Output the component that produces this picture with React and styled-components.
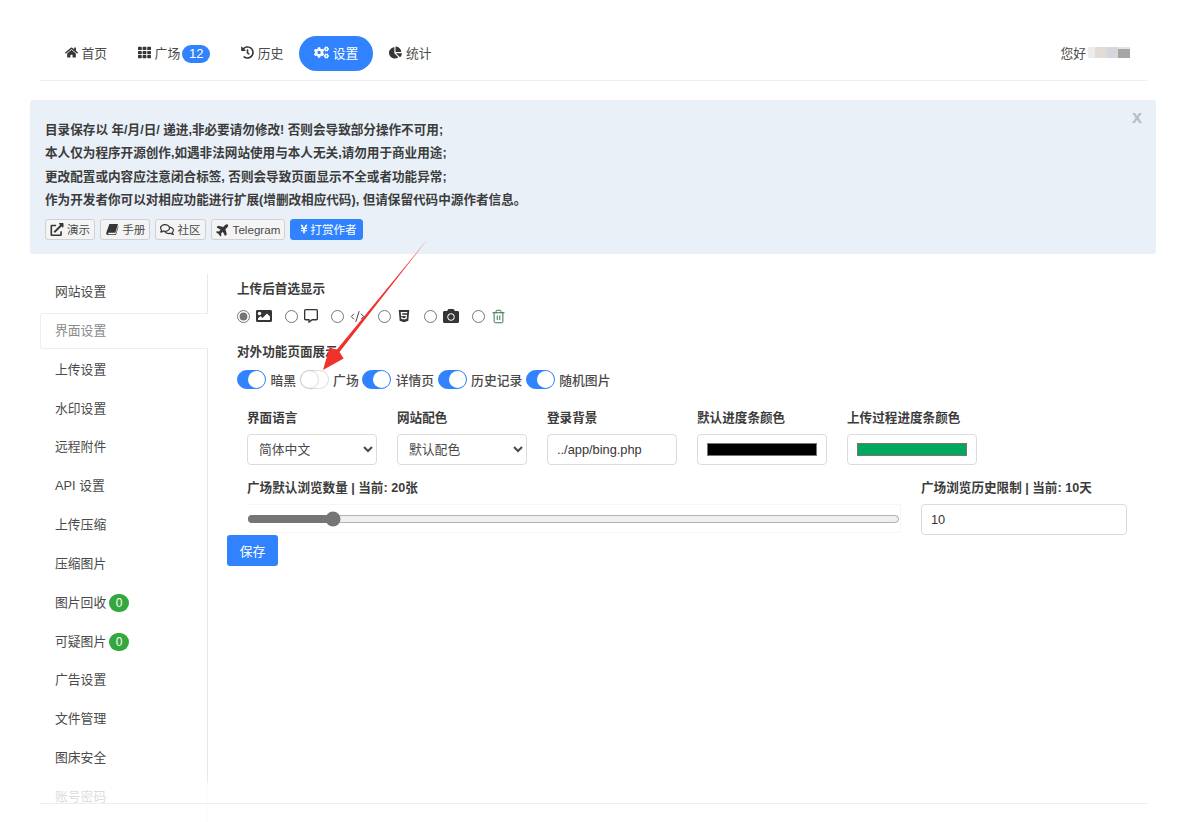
import React from "react";
import styled, { createGlobalStyle } from "styled-components";
import { CodeXml, Trash2 } from "lucide-react";
import {
  FaHome,
  FaTh,
  FaHistory,
  FaCogs,
  FaChartPie,
  FaExternalLinkAlt,
  FaRegComments,
  FaPlane,
  FaYenSign,
  FaImage,
  FaRegCommentAlt,
  FaHtml5,
  FaCamera,
} from "react-icons/fa";

const SlantBook = () => (
  <svg viewBox="0 0 14 14" fill="currentColor">
    <path d="M4.2 1H13.5L10.6 10.6H3.4C2.5 10.6 2.5 12 3.4 12H10.8L13.6 3.2 14 3.8 11.3 13H2.6C1 13 .5 11.6 .9 10.3Z" />
  </svg>
);

const NAV = [
  { label: "首页", icon: FaHome },
  { label: "广场", icon: FaTh, badge: 12 },
  { label: "历史", icon: FaHistory },
  { label: "设置", icon: FaCogs, active: true },
  { label: "统计", icon: FaChartPie },
];

const NOTICES = [
  "目录保存以 年/月/日/ 递进,非必要请勿修改! 否则会导致部分操作不可用;",
  "本人仅为程序开源创作,如遇非法网站使用与本人无关,请勿用于商业用途;",
  "更改配置或内容应注意闭合标签, 否则会导致页面显示不全或者功能异常;",
  "作为开发者你可以对相应功能进行扩展(增删改相应代码), 但请保留代码中源作者信息。",
];

const LINKS = [
  { label: "演示", icon: FaExternalLinkAlt },
  { label: "手册", icon: SlantBook },
  { label: "社区", icon: FaRegComments },
  { label: "Telegram", icon: FaPlane, tilted: true },
];

const MENU = [
  { label: "网站设置" },
  { label: "界面设置", active: true },
  { label: "上传设置" },
  { label: "水印设置" },
  { label: "远程附件" },
  { label: "API 设置" },
  { label: "上传压缩" },
  { label: "压缩图片" },
  { label: "图片回收", count: 0 },
  { label: "可疑图片", count: 0 },
  { label: "广告设置" },
  { label: "文件管理" },
  { label: "图床安全" },
  { label: "账号密码" },
];

const VIEWS = [
  { icon: FaImage, size: 16, checked: true },
  { icon: FaRegCommentAlt, size: 14 },
  { icon: CodeXml, size: 15 },
  { icon: FaHtml5, size: 14 },
  { icon: FaCamera, size: 16 },
  { icon: Trash2, size: 15, green: true },
];

const PAGES = [
  { label: "暗黑", on: true },
  { label: "广场", on: false },
  { label: "详情页", on: true },
  { label: "历史记录", on: true },
  { label: "随机图片", on: true },
];

const App = () => (
  <Page>
    <GlobalStyle />
    <TopNav>
      <NavList>
        {NAV.map(({ label, icon: Icon, badge, active }) => (
          <NavItem key={label} $active={active}>
            <Icon />
            <span>{label}</span>
            {badge && <NavBadge>{badge}</NavBadge>}
          </NavItem>
        ))}
      </NavList>
      <UserBox>
        您好
        <UserMask>
          <i />
          <i />
          <i />
          <i />
        </UserMask>
      </UserBox>
    </TopNav>

    <Notice>
      <CloseMark>x</CloseMark>
      {NOTICES.map((text) => (
        <NoticeLine key={text}>{text}</NoticeLine>
      ))}
      <NoticeButtons>
        {LINKS.map(({ label, icon: Icon, tilted }) => (
          <LinkButton key={label} $tilted={tilted}>
            <Icon />
            {label}
          </LinkButton>
        ))}
        <RewardButton>
          <FaYenSign />
          打赏作者
        </RewardButton>
      </NoticeButtons>
    </Notice>

    <Body>
      <SideMenu>
        {MENU.map(({ label, active, count }) => (
          <MenuItem key={label} $active={active}>
            {label}
            {count !== undefined && <CountBadge>{count}</CountBadge>}
          </MenuItem>
        ))}
      </SideMenu>

      <Panel>
        <Section>
          <SectionTitle>上传后首选显示</SectionTitle>
          <RadioRow>
            {VIEWS.map(({ icon: Icon, size, checked, green }, i) => (
              <RadioLabel key={i} $green={green} $size={size}>
                <input type="radio" name="view" defaultChecked={checked} />
                <Icon strokeWidth={1.5} />
              </RadioLabel>
            ))}
          </RadioRow>
        </Section>

        <Section>
          <SectionTitle>对外功能页面展示</SectionTitle>
          <SwitchRow>
            {PAGES.map(({ label, on }) => (
              <SwitchLabel key={label}>
                <Switch type="checkbox" defaultChecked={on} />
                {label}
              </SwitchLabel>
            ))}
          </SwitchRow>
        </Section>

        <FieldRow>
          <Field>
            <FieldLabel>界面语言</FieldLabel>
            <Select defaultValue="zh">
              <option value="zh">简体中文</option>
            </Select>
          </Field>
          <Field>
            <FieldLabel>网站配色</FieldLabel>
            <Select defaultValue="default">
              <option value="default">默认配色</option>
            </Select>
          </Field>
          <Field>
            <FieldLabel>登录背景</FieldLabel>
            <TextInput type="text" defaultValue="../app/bing.php" />
          </Field>
          <Field>
            <FieldLabel>默认进度条颜色</FieldLabel>
            <ColorInput type="color" defaultValue="#000000" />
          </Field>
          <Field>
            <FieldLabel>上传过程进度条颜色</FieldLabel>
            <ColorInput type="color" defaultValue="#00a85f" />
          </Field>
        </FieldRow>

        <RangeRow>
          <div>
            <FieldLabel>广场默认浏览数量 | 当前: 20张</FieldLabel>
            <RangeBox>
              <Range type="range" min="0" max="163" defaultValue="20" />
            </RangeBox>
          </div>
          <div>
            <FieldLabel>广场浏览历史限制 | 当前: 10天</FieldLabel>
            <TextInput type="text" defaultValue="10" />
          </div>
        </RangeRow>

        <SaveButton>保存</SaveButton>
      </Panel>
    </Body>

    <BottomFade />

    <Arrow viewBox="0 0 120 140" aria-hidden="true">
      <polygon
        points="107,1 19.5,113 23.6,119.4 3,131 9.6,108.2 16.5,111"
        fill="#f0302a"
      />
    </Arrow>
  </Page>
);

const GlobalStyle = createGlobalStyle`
  html, body {
    margin: 0;
    padding: 0;
    background: #fff;
  }

  body {
    font-family: "Liberation Sans", "Noto Sans CJK SC", sans-serif;
    font-size: 12.8px;
    color: #363636;
  }

  * {
    box-sizing: border-box;
  }
`;

const Page = styled.div`
  position: relative;
  width: 1200px;
  height: 822px;
  overflow: hidden;
`;

const TopNav = styled.header`
  display: flex;
  align-items: center;
  justify-content: space-between;
  height: 81px;
  margin: 0 53px 0 40px;
  padding: 36px 17px 9px 10px;
  border-bottom: 1px solid #eeeeee;
`;

const NavList = styled.nav`
  display: flex;
  align-items: center;
  gap: 1px;
`;

const NavItem = styled.a`
  display: flex;
  align-items: center;
  gap: 3.5px;
  height: 35px;
  padding: 0 15px 2px;
  border-radius: 18px;
  color: ${(props) => (props.$active ? "#fff" : "#4a4a4a")};
  background: ${(props) => (props.$active ? "#3082ff" : "transparent")};

  svg {
    width: ${(props) => (props.$active ? "15px" : "13px")};
    height: ${(props) => (props.$active ? "15px" : "13px")};
    color: ${(props) => (props.$active ? "#fff" : "#363636")};
  }
`;

const NavBadge = styled.span`
  width: 28px;
  height: 18px;
  margin: 2px 0 0 -1.5px;
  border-radius: 9px;
  background: #3082ff;
  color: #fff;
  font-size: 13px;
  line-height: 18px;
  text-align: center;
`;

const UserBox = styled.div`
  display: flex;
  align-items: center;
  padding-bottom: 3px;
  color: #4a4a4a;
`;

const UserMask = styled.span`
  display: flex;
  height: 11px;
  margin-left: 2px;

  i {
    height: 11px;
    width: 7px;
    background: #ececec;
  }

  i:nth-child(2) {
    width: 12px;
    background: #e2dcd8;
  }

  i:nth-child(3) {
    width: 11px;
    background: #d4d7dc;
  }

  i:nth-child(4) {
    width: 12px;
    background: linear-gradient(#e4e4e2 2px, #a5a5a3 2px);
  }
`;

const Notice = styled.section`
  position: relative;
  height: 154px;
  margin: 19px 44px 0 30px;
  padding: 19px 15px 0;
  border-radius: 3px;
  background: #e9f0f8;
`;

const CloseMark = styled.span`
  position: absolute;
  top: 7px;
  right: 14px;
  color: #b9bec4;
  font-size: 18px;
  font-weight: 700;
`;

const NoticeLine = styled.p`
  margin: 0;
  height: 23.4px;
  color: #3c3c3c;
  font-size: 12.6px;
  font-weight: 700;
  line-height: 23.4px;
`;

const NoticeButtons = styled.div`
  display: flex;
  gap: 5px;
  margin-top: 6px;
`;

const LinkButton = styled.button`
  display: flex;
  align-items: center;
  gap: 3px;
  height: 21px;
  padding: 0 4px;
  border: 1px solid #d0d0d0;
  border-radius: 3px;
  background: #f4f4f4;
  color: #4a4a4a;
  font: inherit;
  font-size: 11.6px;

  svg {
    width: 14px;
    height: 13px;
    color: #363636;
    transform: ${(props) => (props.$tilted ? "rotate(-45deg)" : "none")};
  }
`;

const RewardButton = styled(LinkButton)`
  gap: 2px;
  padding: 0 5px 0 9px;
  border-color: #3082ff;
  background: #3082ff;
  color: #fff;

  svg {
    width: 8px;
    height: 10px;
    color: #fff;
  }
`;

const Body = styled.main`
  display: flex;
  margin: 20px 0 0 40px;
`;

const SideMenu = styled.aside`
  position: relative;
  flex: none;
  width: 168px;
  height: 560px;
  border-right: 1px solid #e8e8e8;
`;

const MenuItem = styled.a`
  display: flex;
  align-items: center;
  gap: 3px;
  position: relative;
  width: ${(props) => (props.$active ? "168px" : "auto")};
  height: ${(props) => (props.$active ? "36px" : "35px")};
  margin-bottom: ${(props) => (props.$active ? "2.85px" : "3.85px")};
  padding: 0 0 2px ${(props) => (props.$active ? "14px" : "15px")};
  color: ${(props) => (props.$active ? "#8a8a8a" : "#4a4a4a")};
  background: #fff;
  border: ${(props) => (props.$active ? "1px solid #eeeeee" : "0")};
  border-right: 0;
  border-radius: 3px 0 0 3px;
  z-index: ${(props) => (props.$active ? 1 : "auto")};
`;

const CountBadge = styled.span`
  width: 20px;
  height: 18px;
  margin-top: 3px;
  border-radius: 9px;
  background: #33a83f;
  color: #fff;
  font-size: 12px;
  line-height: 18px;
  text-align: center;
`;

const Panel = styled.div`
  flex: 1;
  padding: 6px 73px 0 19px;
`;

const Section = styled.section`
  padding-left: 10px;
  margin-bottom: 9px;
`;

const SectionTitle = styled.h4`
  margin: 0 0 8px;
  color: #3c3c3c;
  font-size: 12.6px;
  font-weight: 700;
  line-height: 18px;
  height: 18px;
`;

const RadioRow = styled.div`
  display: flex;
  align-items: center;
  gap: 13px;
  height: 20px;
  margin-bottom: 17px;
`;

const RadioLabel = styled.label`
  display: flex;
  align-items: center;
  gap: 6px;

  input {
    width: 13px;
    height: 13px;
    margin: 0;
    accent-color: #757575;
  }

  svg {
    width: ${(props) => props.$size}px;
    height: ${(props) => props.$size}px;
    color: ${(props) => (props.$green ? "#2e6b45" : "#363636")};
  }
`;

const SwitchRow = styled.div`
  display: flex;
  align-items: center;
  gap: 3.5px;
  height: 20px;
  margin-bottom: 20px;
`;

const SwitchLabel = styled.label`
  display: flex;
  align-items: center;
  gap: 4.5px;
  color: #4a4a4a;
  font-weight: 500;
`;

const Switch = styled.input`
  appearance: none;
  position: relative;
  width: 29px;
  height: 19px;
  margin: 0;
  border: 1px solid ${(props) => (props.defaultChecked ? "#3082ff" : "#dddddd")};
  border-radius: 10px;
  background: ${(props) => (props.defaultChecked ? "#3082ff" : "#fff")};

  &::before {
    content: "";
    position: absolute;
    top: 0;
    left: ${(props) => (props.defaultChecked ? "10px" : "0")};
    width: 17px;
    height: 17px;
    border-radius: 50%;
    background: #fff;
    box-shadow: ${(props) =>
      props.defaultChecked ? "none" : "0 0 2px rgba(0, 0, 0, 0.35)"};
  }
`;

const FieldRow = styled.div`
  display: flex;
  gap: 20px;
  padding-left: 20px;
  margin-bottom: 14px;
`;

const Field = styled.div`
  width: 130px;
`;

const FieldLabel = styled.label`
  display: block;
  height: 18px;
  margin-bottom: 7px;
  color: #3c3c3c;
  font-size: 12.6px;
  font-weight: 700;
  line-height: 19px;
  white-space: nowrap;
`;

const Select = styled.select`
  display: block;
  width: 130px;
  height: 31px;
  padding: 0 3px 0 7px;
  border: 1px solid #dbdbdb;
  border-radius: 4px;
  background: #fff;
  color: #4a4a4a;
  font: inherit;
`;

const TextInput = styled.input`
  display: block;
  width: 100%;
  height: 31px;
  padding: 0 9px;
  border: 1px solid #dbdbdb;
  border-radius: 4px;
  color: #363636;
  font: inherit;
  outline: none;
`;

const ColorInput = styled.input`
  display: block;
  width: 130px;
  height: 31px;
  padding: 8px 9px;
  border: 1px solid #dbdbdb;
  border-radius: 4px;
  background: #fff;

  &::-webkit-color-swatch-wrapper {
    padding: 0;
  }

  &::-webkit-color-swatch {
    border: 1px solid #767676;
    border-radius: 0;
  }
`;

const RangeRow = styled.div`
  display: grid;
  grid-template-columns: 654px 206px;
  column-gap: 20px;
  padding-left: 20px;
`;

const RangeBox = styled.div`
  display: flex;
  align-items: center;
  height: 29px;
  border-top: 1px solid #f6f6f6;
  border-right: 1px solid #f6f6f6;
  border-bottom: 1px solid #f6f6f6;
`;

const Range = styled.input`
  width: 100%;
  margin: 0;
  accent-color: #757575;
`;

const SaveButton = styled.button`
  display: block;
  width: 51px;
  height: 31px;
  margin-top: 0;
  border: 0;
  border-radius: 3px;
  background: #3082ff;
  color: #fff;
  font: inherit;
`;

const BottomFade = styled.footer`
  position: absolute;
  left: 0;
  right: 0;
  top: 783px;
  bottom: 0;
  background: rgba(255, 255, 255, 0.8);

  &::after {
    content: "";
    position: absolute;
    top: 20px;
    left: 40px;
    right: 53px;
    border-top: 1px solid #eeeeee;
  }
`;

const Arrow = styled.svg`
  position: absolute;
  top: 239px;
  left: 320px;
  width: 120px;
  height: 140px;
  pointer-events: none;
`;

export default App;
